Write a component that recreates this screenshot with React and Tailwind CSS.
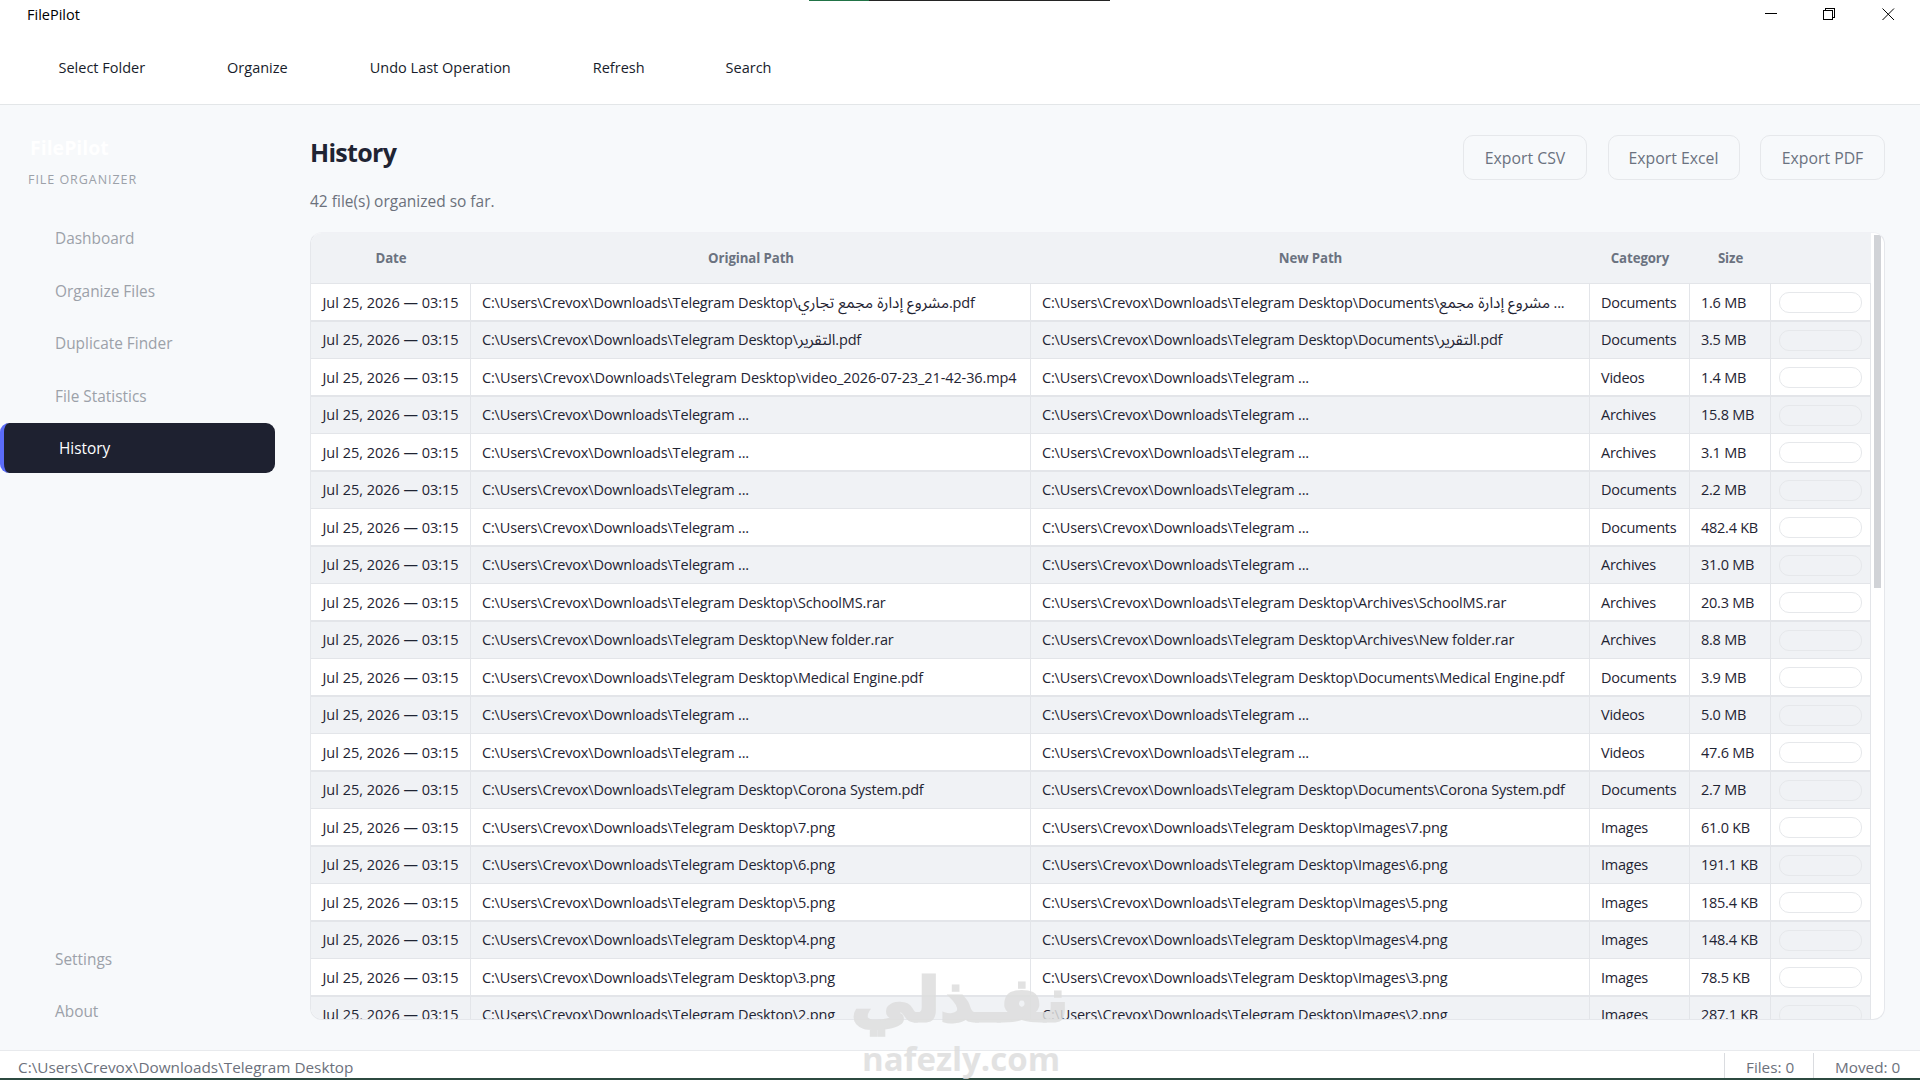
import React from 'react';

const ROOT = 'C:\\Users\\Crevox\\Downloads\\Telegram';
const DESK = ROOT + ' Desktop\\';
const CUT = ROOT + ' ...';
const STAMP = 'Jul 25, 2026 — 03:15';

const file = (name, category, size) => ({
  from: DESK + name,
  to: DESK + category + '\\' + name,
  category,
  size,
});
const cut = (category, size) => ({ from: CUT, to: CUT, category, size });

const rows = [
  {
    from: DESK, fromAr: 'مشروع إدارة مجمع تجاري', fromEnd: '.pdf',
    to: DESK + 'Documents\\', toAr: 'مشروع إدارة مجمع', toEnd: ' ...',
    category: 'Documents', size: '1.6 MB',
  },
  {
    from: DESK, fromAr: 'التقرير', fromEnd: '.pdf',
    to: DESK + 'Documents\\', toAr: 'التقرير', toEnd: '.pdf',
    category: 'Documents', size: '3.5 MB',
  },
  { from: DESK + 'video_2026-07-23_21-42-36.mp4', to: CUT, category: 'Videos', size: '1.4 MB' },
  cut('Archives', '15.8 MB'),
  cut('Archives', '3.1 MB'),
  cut('Documents', '2.2 MB'),
  cut('Documents', '482.4 KB'),
  cut('Archives', '31.0 MB'),
  file('SchoolMS.rar', 'Archives', '20.3 MB'),
  file('New folder.rar', 'Archives', '8.8 MB'),
  file('Medical Engine.pdf', 'Documents', '3.9 MB'),
  cut('Videos', '5.0 MB'),
  cut('Videos', '47.6 MB'),
  file('Corona System.pdf', 'Documents', '2.7 MB'),
  file('7.png', 'Images', '61.0 KB'),
  file('6.png', 'Images', '191.1 KB'),
  file('5.png', 'Images', '185.4 KB'),
  file('4.png', 'Images', '148.4 KB'),
  file('3.png', 'Images', '78.5 KB'),
  file('2.png', 'Images', '287.1 KB'),
];

const GRID = 'grid grid-cols-[160px_560px_559px_100px_81px_100px] w-[1560px]';

function Path({ text, arabic, end }) {
  const long = text.includes('video_');
  return (
    <div className={`flex items-center border-r border-[#e3e5e9] pl-[11px] whitespace-pre overflow-hidden ${long ? 'tracking-[-0.1px]' : 'tracking-[-0.17px]'}`}>
      <span>{text}</span>
      {arabic && (
        <span dir="rtl" className="font-['Noto_Sans_Arabic','Noto_Sans',sans-serif] text-[15.4px] leading-5 tracking-normal">
          {arabic}
        </span>
      )}
      {end && <span>{end}</span>}
    </div>
  );
}

function Row({ row, odd }) {
  return (
    <div className={`${GRID} shrink-0 border-[#e3e5e9] ${odd ? 'h-[37px] border-b bg-[#f0f2f5] leading-5' : 'h-[38px] border-b-2 bg-white leading-[21px] [&>:not(:last-child)]:pt-px'}`}>
      <div className="flex items-center border-r border-[#e3e5e9] pl-[11.5px] tracking-[-0.02px] whitespace-nowrap">{STAMP}</div>
      <Path text={row.from} arabic={row.fromAr} end={row.fromEnd} />
      <Path text={row.to} arabic={row.toAr} end={row.toEnd} />
      <div className="flex items-center border-r border-[#e3e5e9] pl-[11px] tracking-[-0.25px]">{row.category}</div>
      <div className="flex items-center border-r border-[#e3e5e9] pl-[11px] tracking-[-0.25px] whitespace-nowrap">{row.size}</div>
      <div className="flex items-start border-r border-[#e3e5e9] pl-2 pt-2">
        <div className="h-[21px] w-[83px] rounded-[10px] border border-[#e6e8eb]" />
      </div>
    </div>
  );
}

function NavItem({ label, active }) {
  return active ? (
    <div className="flex h-[50px] w-[275px] items-center rounded-[9px] border-l-4 border-[#5b6cf8] bg-[#1e2130] pl-[55px] pt-[2px] text-white">{label}</div>
  ) : (
    <div className="flex h-[50px] w-[275px] items-center pl-[55px] pt-[2px]">{label}</div>
  );
}

function WindowButtons() {
  return (
    <div className="flex items-start gap-[46px] pr-[25px] pt-2">
      <svg width="13" height="13" viewBox="0 0 13 13" fill="none" stroke="#000" shapeRendering="crispEdges"><path d="M1 5.5h12" /></svg>
      <svg width="13" height="13" viewBox="0 0 13 13" fill="none" stroke="#000" shapeRendering="crispEdges"><path d="M.5 2.5h9v9h-9zM2.5 2.5v-2h9v9h-2" /></svg>
      <svg width="13" height="13" viewBox="0 0 13 13" fill="none" stroke="#000"><path d="M.5.5l11.5 11.5M12 .5L.5 12" /></svg>
    </div>
  );
}

function Watermark() {
  return (
    <div className="pointer-events-none absolute left-[853px] top-[962px] h-[118px] w-[214px] text-[#dedede] opacity-85">
      <div dir="rtl" className="flex h-[84px] origin-top scale-x-[0.97] scale-y-[0.92] items-center justify-center font-['DejaVu_Sans',sans-serif] text-[66px] leading-[84px] font-bold whitespace-nowrap [-webkit-text-stroke:3px_#dedede] [paint-order:stroke_fill] [stroke-linejoin:round]">نفـذلي</div>
      <div className="mt-[-7px] pl-[9px] text-[33px] leading-[40px] font-bold">nafezly.com</div>
    </div>
  );
}

export default function App() {
  return (
    <div className="relative flex h-[1080px] w-[1920px] flex-col overflow-hidden bg-white font-['Open_Sans','Noto_Sans',sans-serif] text-[14.5px] text-[#1f2433]">
      <header className="flex h-[105px] shrink-0 flex-col border-b border-[#e3e6e8]">
        <div className="flex h-8 items-start justify-between">
          <span className="pl-[27px] pt-[5px] leading-5 text-black">FilePilot</span>
          <WindowButtons />
        </div>
        <nav className="flex h-[71px] items-center gap-[82px] pl-[58.5px] text-[14.5px] text-[#171c2b]">
          <span>Select Folder</span>
          <span>Organize</span>
          <span>Undo Last Operation</span>
          <span>Refresh</span>
          <span className="-ml-px">Search</span>
        </nav>
      </header>

      <div className="flex min-h-0 flex-1 bg-[#f7f9fb]">
        <aside className="flex w-[310px] shrink-0 flex-col pb-[14px] text-[15.4px] text-[#9ca1a9]">
          <div className="h-[108px] pl-7 pt-[29px]">
            <div className="pl-[2px] text-[19.5px] leading-7 font-bold text-white">FilePilot</div>
            <div className="mt-[9px] text-[12.5px] leading-[18px] tracking-[0.95px]">FILE ORGANIZER</div>
          </div>
          <div className="flex flex-1 flex-col gap-[2.5px]">
            <NavItem label="Dashboard" />
            <NavItem label="Organize Files" />
            <NavItem label="Duplicate Finder" />
            <NavItem label="File Statistics" />
            <NavItem label="History" active />
          </div>
          <div className="flex flex-col gap-[2.5px]">
            <NavItem label="Settings" />
            <NavItem label="About" />
          </div>
        </aside>

        <main className="flex w-[1575px] flex-col pt-[30px]">
          <div className="flex h-[97px] shrink-0 justify-between">
            <div className="mt-[-1px]">
              <h1 className="text-[25px] leading-9 font-bold tracking-[-0.7px]">History</h1>
              <p className="mt-[19px] text-[15.5px] leading-6 text-[#6c717c]">42 file(s) organized so far.</p>
            </div>
            <div className="flex h-[45px] gap-[20.5px] text-[15.8px] font-medium text-[#6b7280]">
              <button className="w-[124px] rounded-[10px] border border-[#e6e8eb] pt-[3px]">Export CSV</button>
              <button className="w-[132px] rounded-[10px] border border-[#e6e8eb] pt-[3px]">Export Excel</button>
              <button className="w-[125px] rounded-[10px] border border-[#e6e8eb] pt-[3px]">Export PDF</button>
            </div>
          </div>

          <div className="flex h-[788px] shrink-0 overflow-hidden rounded-[12px] border border-[#e5e7eb] border-t-[#f0f1f5] bg-white">
            <div className="flex flex-col">
              <div className={`${GRID} h-[51px] shrink-0 items-center border-b border-[#e3e5e9] bg-[#f0f2f5] pt-[2px] text-center text-[13.25px] font-bold tracking-[-0.1px] text-[#6b7280]`}>
                <span>Date</span>
                <span>Original Path</span>
                <span>New Path</span>
                <span>Category</span>
                <span>Size</span>
                <span />
              </div>
              {rows.map((row, i) => (
                <Row key={i} row={row} odd={i % 2 === 1} />
              ))}
            </div>
            <div className="ml-[3px] mt-[2px] h-[353px] w-[7px] bg-[#d1d3d7]" />
          </div>
        </main>
      </div>

      <footer className="flex h-[30px] shrink-0 border-t border-[#e8eaed] border-b-2 border-b-[#2c4a40] bg-white text-[15.3px] leading-[33px] text-[#6c717c]">
        <span className="h-[27px] flex-1 pl-[18px]">C:\Users\Crevox\Downloads\Telegram Desktop</span>
        <span className="mt-[2px] h-[25px] w-[89px] border-l border-[#dadce0] pl-[21px] leading-[29px]">Files: 0</span>
        <span className="mt-[2px] h-[25px] w-[107px] border-l border-[#dadce0] pl-[21px] leading-[29px]">Moved: 0</span>
      </footer>

      <div className="absolute left-[809px] top-0 flex h-px w-[301px] bg-[#242424]">
        <div className="w-[60px] bg-[#217346]" />
      </div>
      <Watermark />
    </div>
  );
}
